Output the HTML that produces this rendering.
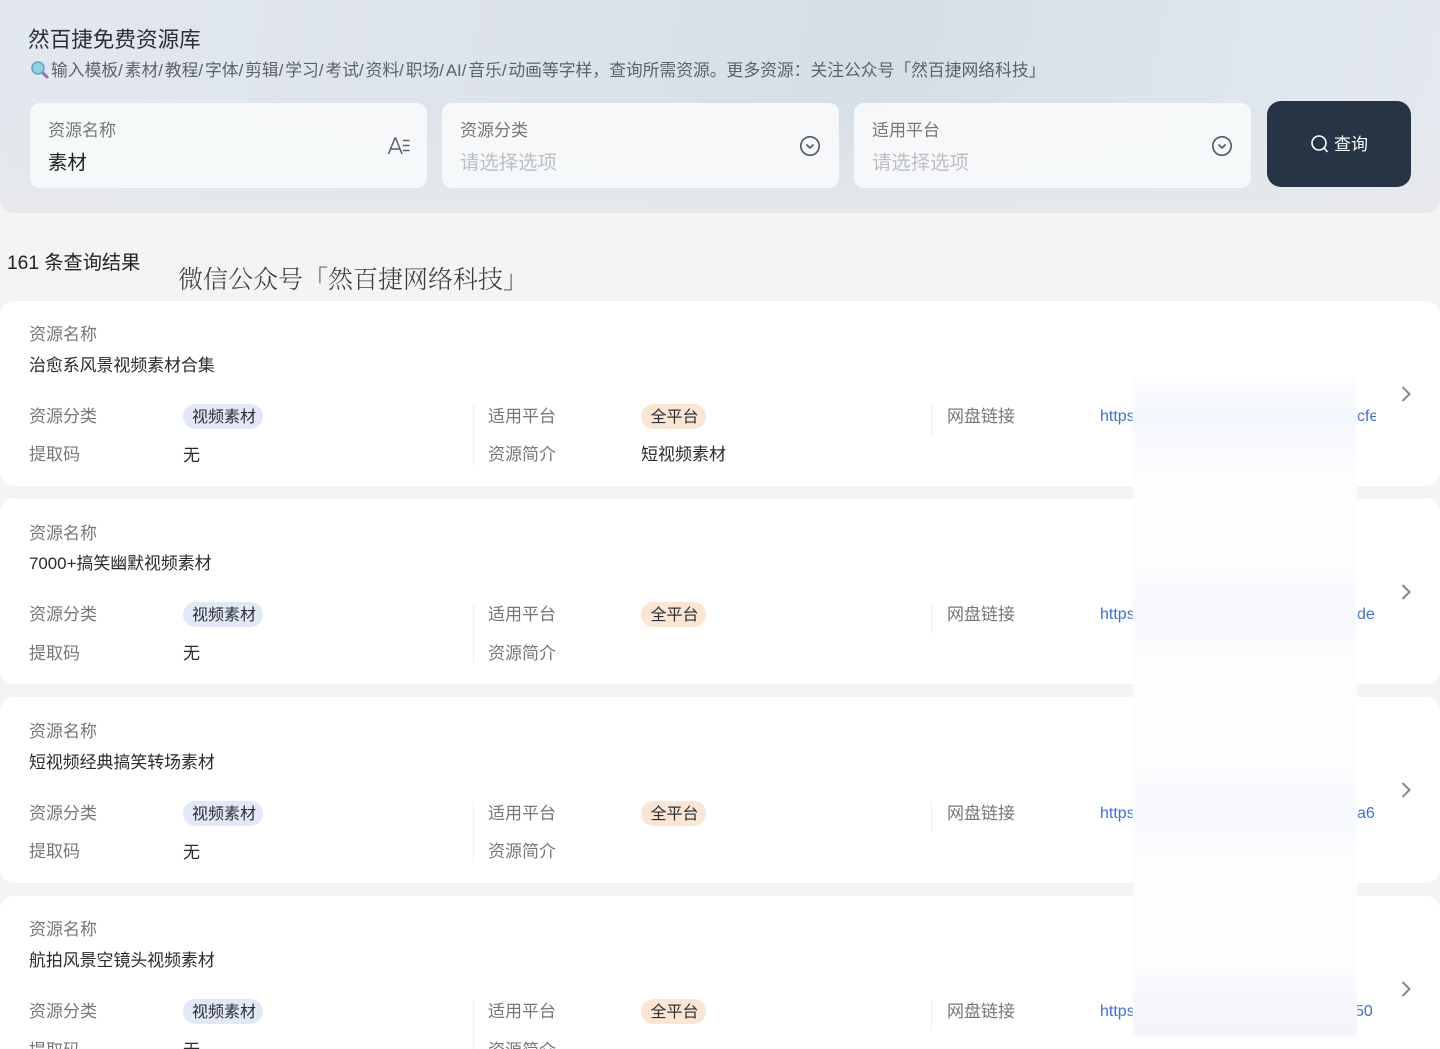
<!DOCTYPE html>
<html lang="zh-CN">
<head>
<meta charset="utf-8">
<title>然百捷免费资源库</title>
<style>
*{box-sizing:border-box;margin:0;padding:0}
html,body{width:1440px;height:1049px;overflow:hidden;background:#f2f4f5}
body{position:relative;font-family:"Liberation Sans","Noto Sans CJK SC",sans-serif;color:#222}
.a{position:absolute;white-space:nowrap;line-height:1.2}
.header{position:absolute;left:0;top:0;width:1440px;height:213px;border-radius:0 0 14px 14px;
background:linear-gradient(180deg,rgba(230,232,234,0) 45%,#e6e8ea 100%),linear-gradient(100deg,#e3e8ef 0%,#dde3eb 35%,#d5dee6 60%,#dfe6ed 85%,#e4e9f0 100%)}
.field{position:absolute;top:103px;width:397px;height:85px;background:rgba(248,250,251,.93);border-radius:10px}
.btn{position:absolute;left:1267px;top:101px;width:144px;height:86px;background:#263445;border-radius:14px}
.card{position:absolute;left:0;width:1440px;background:#fff;border-radius:14px}
.l{font-size:17px;color:#777}
.v{font-size:17px;color:#2a2a2a}
.t{font-size:16.9px}
.tag{position:absolute;height:25px;border-radius:13px;font-size:16px;line-height:27px;text-align:center;color:#2a2f38;white-space:nowrap;padding-left:2px}
.sep{position:absolute;width:1px;background:#eceef0}
.link{font-size:16px;color:#3b6fe0;overflow:hidden}
.mask{position:absolute;left:1133px;top:376px;width:224px;height:662px;background:#fdfdfe}
.blue{position:absolute;left:1133px;width:224px;filter:blur(1.5px)}
.s{letter-spacing:1.9px}
</style>
</head>
<body>
<div class="header"></div>
<div class="a" style="left:28px;top:27px;font-size:21.6px;color:#2b3038">然百捷免费资源库</div>
<svg class="a" style="left:30px;top:60px" width="19" height="19" viewBox="0 0 19 19"><path d="M12 12l5 5" stroke="#9a6fb0" stroke-width="3" stroke-linecap="round"/><circle cx="8" cy="8" r="6" fill="#8fd0e6" stroke="#5fa8c8" stroke-width="1.6"/></svg>
<div class="a" style="left:51px;top:61px;font-size:16.8px;color:#5b626b">输入模板<span class="s">/</span>素材<span class="s">/</span>教程<span class="s">/</span>字体<span class="s">/</span>剪辑<span class="s">/</span>学习<span class="s">/</span>考试<span class="s">/</span>资料<span class="s">/</span>职场<span class="s">/</span>AI<span class="s">/</span>音乐<span class="s">/</span>动画等字样，查询所需资源。更多资源：关注公众号「然百捷网络科技」</div>

<div class="field" style="left:30px"></div>
<div class="field" style="left:442px"></div>
<div class="field" style="left:854px"></div>
<div class="a l" style="left:48px;top:121px">资源名称</div>
<div class="a" style="left:48px;top:152px;font-size:19.4px;color:#222">素材</div>
<div class="a l" style="left:460px;top:121px">资源分类</div>
<div class="a" style="left:460px;top:152px;font-size:19.4px;color:#bcbfc3">请选择选项</div>
<div class="a l" style="left:872px;top:121px">适用平台</div>
<div class="a" style="left:872px;top:152px;font-size:19.4px;color:#bcbfc3">请选择选项</div>
<svg class="a" style="left:387px;top:136px" width="24" height="20" viewBox="0 0 24 20" fill="none" stroke="#5a6068" stroke-width="1.5"><path d="M1.5 18L8 2h.6L15 18M4 13h9"/><path d="M16 4.5h6.5M16 9.5h6.5M16 14.5h6.5"/></svg>
<svg class="a" style="left:799px;top:135px" width="22" height="22" viewBox="0 0 22 22" fill="none" stroke="#50565e" stroke-width="1.6"><circle cx="11" cy="11" r="9.2"/><path d="M7.5 9.5l3.5 3.5 3.5-3.5"/></svg>
<svg class="a" style="left:1211px;top:135px" width="22" height="22" viewBox="0 0 22 22" fill="none" stroke="#50565e" stroke-width="1.6"><circle cx="11" cy="11" r="9.2"/><path d="M7.5 9.5l3.5 3.5 3.5-3.5"/></svg>
<div class="btn"></div>
<svg class="a" style="left:1310px;top:134px" width="20" height="20" viewBox="0 0 20 20" fill="none" stroke="#fff" stroke-width="1.6"><circle cx="9" cy="9" r="7"/><path d="M14 14l3.5 4"/></svg>
<div class="a" style="left:1334px;top:135px;font-size:17px;color:#fff">查询</div>

<div class="a" style="left:7px;top:252px;font-size:19.2px;color:#222">161 条查询结果</div>
<div class="a" style="left:178px;top:266px;font-size:25px;color:#3c3c3c;font-family:'Liberation Serif','Noto Serif CJK SC',serif;font-weight:300">微信公众号「然百捷网络科技」</div>

<!-- card 1 -->
<div class="card" style="top:301px;height:185px"></div>
<div class="a l" style="left:29px;top:325px">资源名称</div>
<div class="a v t" style="left:29px;top:356px">治愈系风景视频素材合集</div>
<div class="a l" style="left:29px;top:407px">资源分类</div>
<div class="tag" style="left:183px;top:403.5px;width:80px;background:#e3e8f8">视频素材</div>
<div class="a l" style="left:29px;top:445px">提取码</div>
<div class="a v" style="left:183px;top:446px">无</div>
<div class="sep" style="left:473px;top:405px;height:60px"></div>
<div class="a l" style="left:488px;top:407px">适用平台</div>
<div class="tag" style="left:641px;top:403.5px;width:65px;background:#fae6d2">全平台</div>
<div class="a l" style="left:488px;top:445px">资源简介</div>
<div class="a v" style="left:641px;top:445px">短视频素材</div>
<div class="sep" style="left:931px;top:405px;height:30px"></div>
<div class="a l" style="left:947px;top:407px">网盘链接</div>
<div class="a link" style="left:1100px;top:407px">https</div>
<div class="a link" style="left:1357px;top:407px;width:19px">cfe</div>
<svg class="a" style="left:1399px;top:385px" width="14" height="18" viewBox="0 0 14 18" fill="none" stroke="#85888c" stroke-width="2"><path d="M3.5 2l7 7-7 7"/></svg>

<!-- card 2 -->
<div class="card" style="top:499px;height:185px"></div>
<div class="a l" style="left:29px;top:524px">资源名称</div>
<div class="a v t" style="left:29px;top:554px">7000+搞笑幽默视频素材</div>
<div class="a l" style="left:29px;top:605px">资源分类</div>
<div class="tag" style="left:183px;top:602px;width:80px;background:#e3e8f8">视频素材</div>
<div class="a l" style="left:29px;top:644px">提取码</div>
<div class="a v" style="left:183px;top:644px">无</div>
<div class="sep" style="left:473px;top:603px;height:60px"></div>
<div class="a l" style="left:488px;top:605px">适用平台</div>
<div class="tag" style="left:641px;top:602px;width:65px;background:#fae6d2">全平台</div>
<div class="a l" style="left:488px;top:644px">资源简介</div>
<div class="sep" style="left:931px;top:603px;height:30px"></div>
<div class="a l" style="left:947px;top:605px">网盘链接</div>
<div class="a link" style="left:1100px;top:605px">https</div>
<div class="a link" style="left:1357px;top:605px;width:18px">de1</div>
<svg class="a" style="left:1399px;top:583px" width="14" height="18" viewBox="0 0 14 18" fill="none" stroke="#85888c" stroke-width="2"><path d="M3.5 2l7 7-7 7"/></svg>

<!-- card 3 -->
<div class="card" style="top:697px;height:186px"></div>
<div class="a l" style="left:29px;top:722px">资源名称</div>
<div class="a v t" style="left:29px;top:753px">短视频经典搞笑转场素材</div>
<div class="a l" style="left:29px;top:804px">资源分类</div>
<div class="tag" style="left:183px;top:800.5px;width:80px;background:#e3e8f8">视频素材</div>
<div class="a l" style="left:29px;top:842px">提取码</div>
<div class="a v" style="left:183px;top:843px">无</div>
<div class="sep" style="left:473px;top:802px;height:60px"></div>
<div class="a l" style="left:488px;top:804px">适用平台</div>
<div class="tag" style="left:641px;top:800.5px;width:65px;background:#fae6d2">全平台</div>
<div class="a l" style="left:488px;top:842px">资源简介</div>
<div class="sep" style="left:931px;top:802px;height:30px"></div>
<div class="a l" style="left:947px;top:804px">网盘链接</div>
<div class="a link" style="left:1100px;top:804px">https</div>
<div class="a link" style="left:1357px;top:804px">a6</div>
<svg class="a" style="left:1399px;top:781px" width="14" height="18" viewBox="0 0 14 18" fill="none" stroke="#85888c" stroke-width="2"><path d="M3.5 2l7 7-7 7"/></svg>

<!-- card 4 -->
<div class="card" style="top:896px;height:170px"></div>
<div class="a l" style="left:29px;top:920px">资源名称</div>
<div class="a v t" style="left:29px;top:951px">航拍风景空镜头视频素材</div>
<div class="a l" style="left:29px;top:1002px">资源分类</div>
<div class="tag" style="left:183px;top:999px;width:80px;background:#e3e8f8">视频素材</div>
<div class="a l" style="left:29px;top:1041px">提取码</div>
<div class="a v" style="left:183px;top:1041px">无</div>
<div class="sep" style="left:473px;top:1000px;height:60px"></div>
<div class="a l" style="left:488px;top:1002px">适用平台</div>
<div class="tag" style="left:641px;top:999px;width:65px;background:#fae6d2">全平台</div>
<div class="a l" style="left:488px;top:1041px">资源简介</div>
<div class="sep" style="left:931px;top:1000px;height:30px"></div>
<div class="a l" style="left:947px;top:1002px">网盘链接</div>
<div class="a link" style="left:1100px;top:1002px">https</div>
<div class="a link" style="left:1355px;top:1002px">50</div>
<svg class="a" style="left:1399px;top:980px" width="14" height="18" viewBox="0 0 14 18" fill="none" stroke="#85888c" stroke-width="2"><path d="M3.5 2l7 7-7 7"/></svg>

<!-- masked region -->
<div class="mask"></div>
<div class="blue" style="top:382px;height:88px;background:linear-gradient(180deg,#fafbfe,#f4f7fe 40%,#f8f9fe 70%,#fdfdfe)"></div>
<div class="blue" style="top:572px;height:80px;background:linear-gradient(180deg,#fbfcfe,#f6f8fe 40%,#f8f9fe 75%,#fdfdfe)"></div>
<div class="blue" style="top:768px;height:85px;background:linear-gradient(180deg,#fcfcfe,#f8f9fe 40%,#f9fafe 75%,#fdfdfe)"></div>
<div class="blue" style="top:968px;height:68px;background:linear-gradient(180deg,#fcfcfe,#f5f7fc 45%,#f3f5fb)"></div>
</body>
</html>
